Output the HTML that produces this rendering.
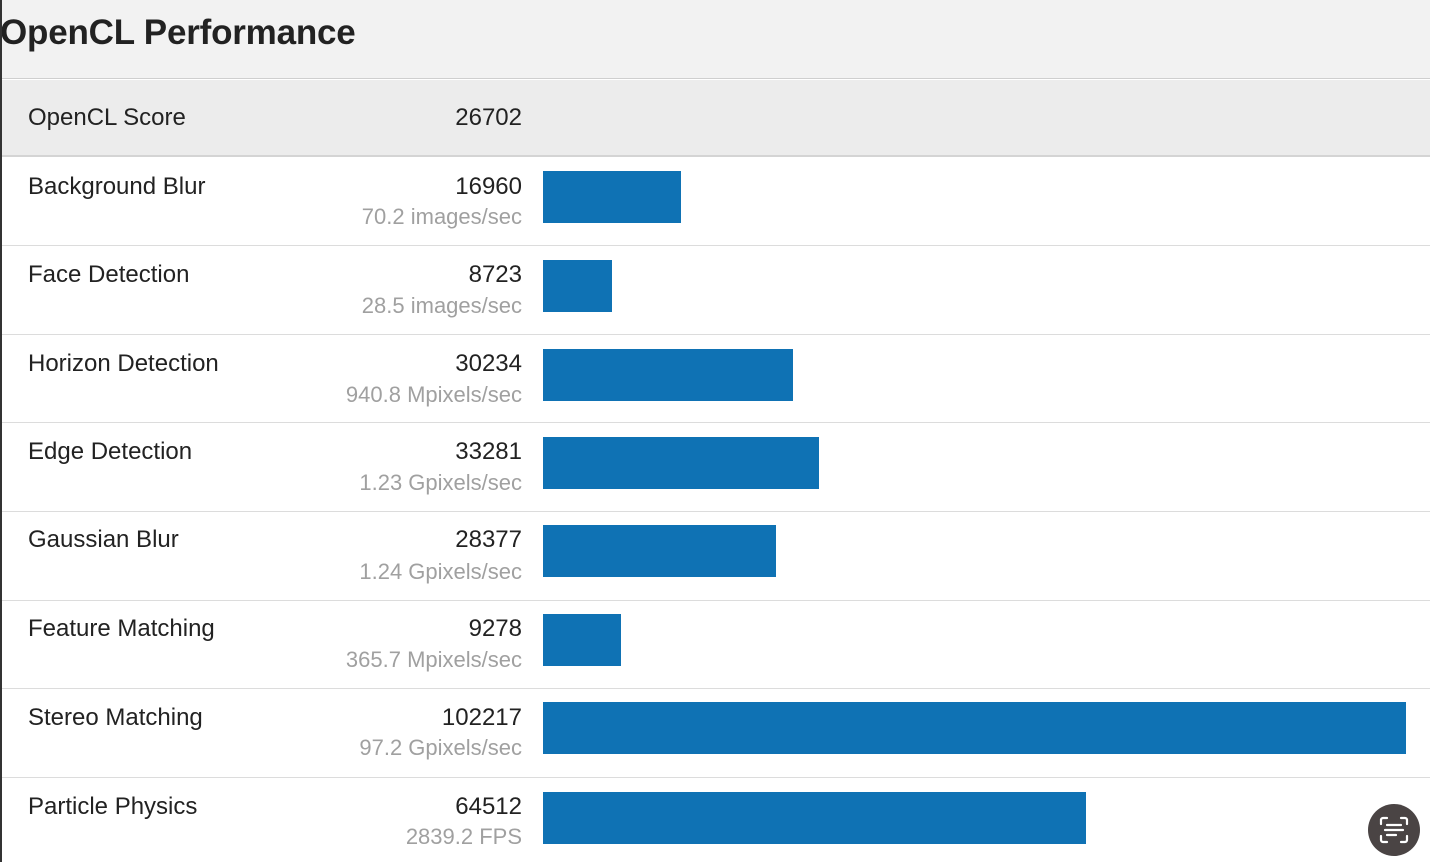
<!DOCTYPE html>
<html><head><meta charset="utf-8"><style>
*{margin:0;padding:0;box-sizing:border-box}
body{width:1430px;height:862px;overflow:hidden;background:#fff;font-family:"Liberation Sans",Arial,sans-serif;position:relative;color:#222}
.lb{position:absolute;left:0;top:0;width:2px;height:862px;background:#333;z-index:5}
.hd{position:absolute;left:0;top:0;width:1430px;height:79px;background:#f2f2f2;border-bottom:1px solid #cfcfcf}
.hd h1{position:absolute;left:0;top:13px;font-size:35px;font-weight:bold;color:#222;letter-spacing:-0.2px}
.sc{position:absolute;left:0;top:80px;width:1430px;height:77px;background:#ececec;border-bottom:2px solid #d4d4d4}
.t{position:absolute;font-size:24px;white-space:nowrap}
.r{position:absolute;right:908px;font-size:24px;white-space:nowrap;text-align:right}
.g{color:#a0a0a0;font-size:22px}
.line{position:absolute;left:0;width:1430px;height:1px;background:#dcdcdc}
.bar{position:absolute;left:543px;height:52px;background:#0f72b4}
.btn{position:absolute;left:1368px;top:804px;width:52px;height:52px;border-radius:50%;background:#4a4444}
</style></head><body>
<div class="lb"></div>
<div class="hd"><h1>OpenCL Performance</h1></div>
<div class="sc"></div>
<div class="t" style="left:28px;top:104px">OpenCL Score</div>
<div class="r" style="top:104px">26702</div>

<div class="t" style="left:28px;top:173px">Background Blur</div>
<div class="r" style="top:173px">16960</div>
<div class="r g" style="top:204px">70.2 images/sec</div>
<div class="bar" style="top:171px;width:138px"></div>
<div class="line" style="top:245px"></div>

<div class="t" style="left:28px;top:261px">Face Detection</div>
<div class="r" style="top:261px">8723</div>
<div class="r g" style="top:293px">28.5 images/sec</div>
<div class="bar" style="top:260px;width:69px"></div>
<div class="line" style="top:334px"></div>

<div class="t" style="left:28px;top:350px">Horizon Detection</div>
<div class="r" style="top:350px">30234</div>
<div class="r g" style="top:382px">940.8 Mpixels/sec</div>
<div class="bar" style="top:349px;width:250px"></div>
<div class="line" style="top:422px"></div>

<div class="t" style="left:28px;top:438px">Edge Detection</div>
<div class="r" style="top:438px">33281</div>
<div class="r g" style="top:470px">1.23 Gpixels/sec</div>
<div class="bar" style="top:437px;width:276px"></div>
<div class="line" style="top:511px"></div>

<div class="t" style="left:28px;top:526px">Gaussian Blur</div>
<div class="r" style="top:526px">28377</div>
<div class="r g" style="top:559px">1.24 Gpixels/sec</div>
<div class="bar" style="top:525px;width:233px"></div>
<div class="line" style="top:600px"></div>

<div class="t" style="left:28px;top:615px">Feature Matching</div>
<div class="r" style="top:615px">9278</div>
<div class="r g" style="top:647px">365.7 Mpixels/sec</div>
<div class="bar" style="top:614px;width:78px"></div>
<div class="line" style="top:688px"></div>

<div class="t" style="left:28px;top:704px">Stereo Matching</div>
<div class="r" style="top:704px">102217</div>
<div class="r g" style="top:735px">97.2 Gpixels/sec</div>
<div class="bar" style="top:702px;width:863px"></div>
<div class="line" style="top:777px"></div>

<div class="t" style="left:28px;top:793px">Particle Physics</div>
<div class="r" style="top:793px">64512</div>
<div class="r g" style="top:824px">2839.2 FPS</div>
<div class="bar" style="top:792px;width:543px"></div>

<div class="btn"><svg width="52" height="52" viewBox="0 0 52 52" fill="none" stroke="#fff" stroke-width="2.2" stroke-linecap="round">
<path d="M13 20v-4a2 2 0 0 1 2-2h4M33 14h4a2 2 0 0 1 2 2v4M39 32v4a2 2 0 0 1-2 2h-4M19 38h-4a2 2 0 0 1-2-2v-4"/>
<path d="M19 21h14M17 26h18M19 31h9"/></svg></div>
</body></html>
